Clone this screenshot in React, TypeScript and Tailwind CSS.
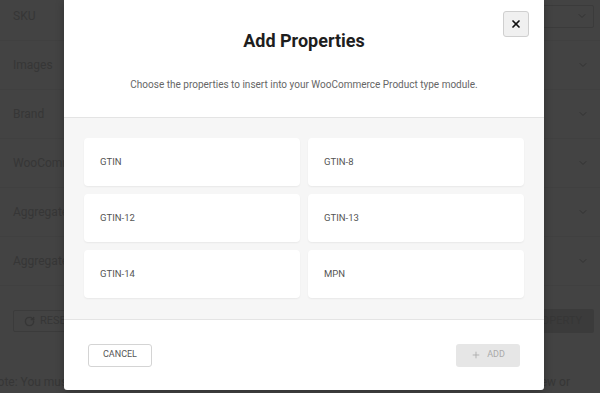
import React from 'react';
import { X, Plus, ChevronDown, RotateCw } from 'lucide-react';

const rows = ['SKU', 'Images', 'Brand', 'WooCommerce Product', 'Aggregate Rating', 'Aggregate Offer'];
const properties = ['GTIN', 'GTIN-8', 'GTIN-12', 'GTIN-13', 'GTIN-14', 'MPN'];

const font = { fontFamily: 'Roboto, "Liberation Sans", sans-serif' };

const BackgroundPage: React.FC = () => (
  <div className="h-[393px] w-[600px] overflow-hidden bg-[#434343] text-[#363636]" style={font}>
    <div className="mt-[-8px] flex flex-col">
      {rows.map((label, i) => (
        <div key={label} className="flex h-[49px] items-center justify-between border-b border-[#404040] pl-[13px] pr-[6px]">
          <span className="text-[12px]">{label}</span>
          <div
            className={
              i === 0
                ? 'flex h-[23px] w-[200px] items-center justify-end rounded-[2px] border border-[#3b3b3b] pr-[5px]'
                : 'flex h-[23px] w-[200px] items-center justify-end pr-[5px]'
            }
          >
            <ChevronDown size={12} strokeWidth={2} className="text-[#333]" />
          </div>
        </div>
      ))}
    </div>
    <div className="mt-[23px] flex items-center justify-between px-[13px] pr-[6px]">
      <button className="flex h-[22px] items-center gap-[5px] rounded-[2px] border border-[#3b3b3b] px-[10px] text-[11px] uppercase">
        <RotateCw size={11} strokeWidth={3} />
        Reset
      </button>
      <button className="flex h-[24px] items-center rounded-[2px] bg-[#3b3b3b] px-[12px] text-[11px] uppercase">
        Add Property
      </button>
    </div>
    <div className="mt-[40px] flex justify-between text-[12px]">
      <span className="ml-[-11px] whitespace-nowrap">Note: You must include the required</span>
      <span className="mr-[30px] whitespace-nowrap">to preview or</span>
    </div>
  </div>
);

const PropertyCard: React.FC<{ name: string }> = ({ name }) => (
  <button className="flex h-[48px] items-center rounded-[4px] bg-white pl-[16px] text-[9.5px] text-[#555] shadow-[0_1px_2px_rgba(0,0,0,0.06)]">
    {name}
  </button>
);

const AddPropertiesModal: React.FC = () => (
  <div className="absolute left-[64px] top-0 flex h-[390px] w-[480px] flex-col rounded-b-[3px] bg-white shadow-[0_2px_8px_rgba(0,0,0,0.25)]" style={font}>
    <div className="relative h-[118px] shrink-0 border-b border-[#e4e4e4] text-center">
      <h2 className="mt-[30px] text-[18px] font-bold leading-[22px] text-[#1e1e1e]">Add Properties</h2>
      <p className="mt-[26px] text-[10px] leading-[14px] text-[#666]">
        Choose the properties to insert into your WooCommerce Product type module.
      </p>
      <button className="absolute right-[15px] top-[11px] flex h-[26px] w-[26px] items-center justify-center rounded-[3px] border border-[#cfcfcf] bg-[#f0f0f0]">
        <X size={12} strokeWidth={3.5} className="text-[#111]" />
      </button>
    </div>
    <div className="grid h-[202px] shrink-0 grid-cols-2 content-start gap-[8px] border-b border-[#e4e4e4] bg-[#f6f6f6] px-[20px] pt-[20px]">
      {properties.map((p) => (
        <PropertyCard key={p} name={p} />
      ))}
    </div>
    <div className="flex flex-1 items-center justify-between px-[24px]">
      <button className="flex h-[23px] w-[64px] items-center justify-center rounded-[3px] border border-[#d4d4d4] bg-white text-[9px] uppercase text-[#555]">
        Cancel
      </button>
      <button className="flex h-[23px] w-[64px] items-center justify-center gap-[6px] rounded-[3px] bg-[#e6e6e6] text-[9px] uppercase text-[#aaa]">
        <Plus size={10} strokeWidth={2} />
        Add
      </button>
    </div>
  </div>
);

export default function App() {
  return (
    <div className="relative h-[393px] w-[600px] overflow-hidden">
      <BackgroundPage />
      <AddPropertiesModal />
    </div>
  );
}
